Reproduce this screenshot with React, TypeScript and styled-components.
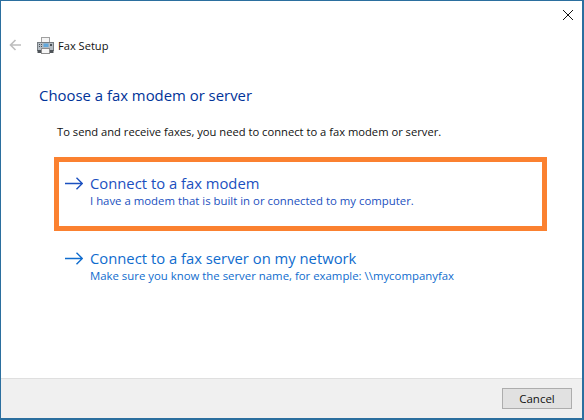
import React from 'react';
import styled, { createGlobalStyle } from 'styled-components';

const GlobalStyle = createGlobalStyle`
  html, body {
    margin: 0;
    padding: 0;
    background: #fff;
  }
  * {
    box-sizing: border-box;
  }
`;

const options = [
  {
    title: 'Connect to a fax modem',
    note: 'I have a modem that is built in or connected to my computer.',
    highlighted: true,
    color: '#1b50c0'
  },
  {
    title: 'Connect to a fax server on my network',
    note: 'Make sure you know the server name, for example: \\\\mycompanyfax',
    highlighted: false,
    color: '#0f6cce'
  }
];

const BackArrow = () => (
  <svg width="12" height="12" viewBox="0 0 12 12" fill="none" stroke="#bdbdbd" strokeWidth="1.6">
    <path d="M12 6H1.5M6.5 1L1.5 6l5 5" />
  </svg>
);

const CloseIcon = () => (
  <svg width="10" height="10" viewBox="0 0 10 10" fill="none" stroke="#111" strokeWidth="1">
    <path d="M0 0l10 10M10 0L0 10" />
  </svg>
);

const FaxIcon = () => (
  <svg width="17" height="17" viewBox="0 0 17 17">
    <rect x="4.5" y="0.5" width="8" height="6" fill="#f4f4f4" stroke="#a0a0a0" />
    <rect x="0.5" y="5.5" width="16" height="8" fill="#b4bcc3" stroke="#777d82" />
    <rect x="2" y="7" width="1" height="1" fill="#4a5157" />
    <rect x="4" y="7" width="1" height="1" fill="#4a5157" />
    <rect x="2" y="9" width="1" height="1" fill="#4a5157" />
    <rect x="4" y="9" width="1" height="1" fill="#4a5157" />
    <rect x="6.5" y="6.5" width="5" height="3.5" fill="#62a8dc" />
    <rect x="13" y="7" width="2" height="2" fill="#4a5157" />
    <rect x="0.5" y="13" width="16" height="3" fill="#4f5459" />
    <rect x="4.5" y="11.5" width="8" height="5" fill="#f6f6f6" stroke="#8d8d8d" />
  </svg>
);

const LinkArrow = ({ color }: { color: string }) => (
  <svg width="18" height="13" viewBox="0 0 18 13" fill="none" stroke={color} strokeWidth="1.4">
    <path d="M0 6.5h17M11.5 0.7l5.8 5.8-5.8 5.8" />
  </svg>
);

const App = () => (
  <>
    <GlobalStyle />
    <Window>
      <CloseButton>
        <CloseIcon />
      </CloseButton>
      <NavBar>
        <BackButton>
          <BackArrow />
        </BackButton>
        <FaxIcon />
        <WindowTitle>Fax Setup</WindowTitle>
      </NavBar>
      <Content>
        <Heading>Choose a fax modem or server</Heading>
        <Intro>To send and receive faxes, you need to connect to a fax modem or server.</Intro>
        <OptionList>
          {options.map((option) => (
            <Option key={option.title} $highlighted={option.highlighted} $color={option.color}>
              <ArrowSlot>
                <LinkArrow color={option.color} />
              </ArrowSlot>
              <div>
                <OptionTitle>{option.title}</OptionTitle>
                <OptionNote>{option.note}</OptionNote>
              </div>
            </Option>
          ))}
        </OptionList>
      </Content>
      <Footer>
        <CancelButton>Cancel</CancelButton>
      </Footer>
    </Window>
  </>
);

const Window = styled.div`
  position: relative;
  display: flex;
  flex-direction: column;
  width: 584px;
  height: 420px;
  border: 1px solid #2b6f9f;
  border-right-width: 2px;
  border-bottom-width: 2px;
  background: #fff;
  font-family: 'Open Sans', 'Noto Sans', sans-serif;
  overflow: hidden;
`;

const CloseButton = styled.div`
  position: absolute;
  top: 9px;
  right: 9px;
  display: flex;
`;

const NavBar = styled.div`
  display: flex;
  align-items: center;
  height: 38px;
  margin-top: 25px;
  padding-left: 8px;
`;

const BackButton = styled.div`
  display: flex;
  width: 28px;
`;

const WindowTitle = styled.span`
  margin-left: 4px;
  font-size: 11.1px;
  color: #111;
`;

const Content = styled.div`
  flex: 1;
  padding: 21px 0 0 38px;
`;

const Heading = styled.div`
  font-size: 14.9px;
  line-height: 20px;
  color: #003399;
`;

const Intro = styled.div`
  margin: 19px 0 0 18px;
  font-size: 11.2px;
  line-height: 16px;
  color: #111;
`;

const OptionList = styled.div`
  display: flex;
  flex-direction: column;
  gap: 1px;
  width: 493px;
  margin: 17px 0 0 15px;
`;

const Option = styled.div<{ $highlighted: boolean; $color: string }>`
  display: flex;
  height: 74px;
  padding: 11px 6px;
  border: 5px solid ${(p) => (p.$highlighted ? '#fb8130' : 'transparent')};
  color: ${(p) => p.$color};
`;

const ArrowSlot = styled.div`
  display: flex;
  align-items: flex-start;
  width: 25px;
  padding-top: 4px;
`;

const OptionTitle = styled.div`
  font-size: 14.8px;
  line-height: 20px;
`;

const OptionNote = styled.div`
  margin-top: 1px;
  font-size: 11.38px;
  line-height: 14px;
`;

const Footer = styled.div`
  display: flex;
  justify-content: flex-end;
  align-items: center;
  height: 40px;
  padding-right: 10px;
  border-top: 1px solid #dfdfdf;
  background: #f0f0f0;
`;

const CancelButton = styled.div`
  display: flex;
  align-items: center;
  justify-content: center;
  width: 70px;
  height: 21px;
  border: 1px solid #adadad;
  background: #e1e1e1;
  font-size: 11.5px;
  color: #111;
`;

export default App;
